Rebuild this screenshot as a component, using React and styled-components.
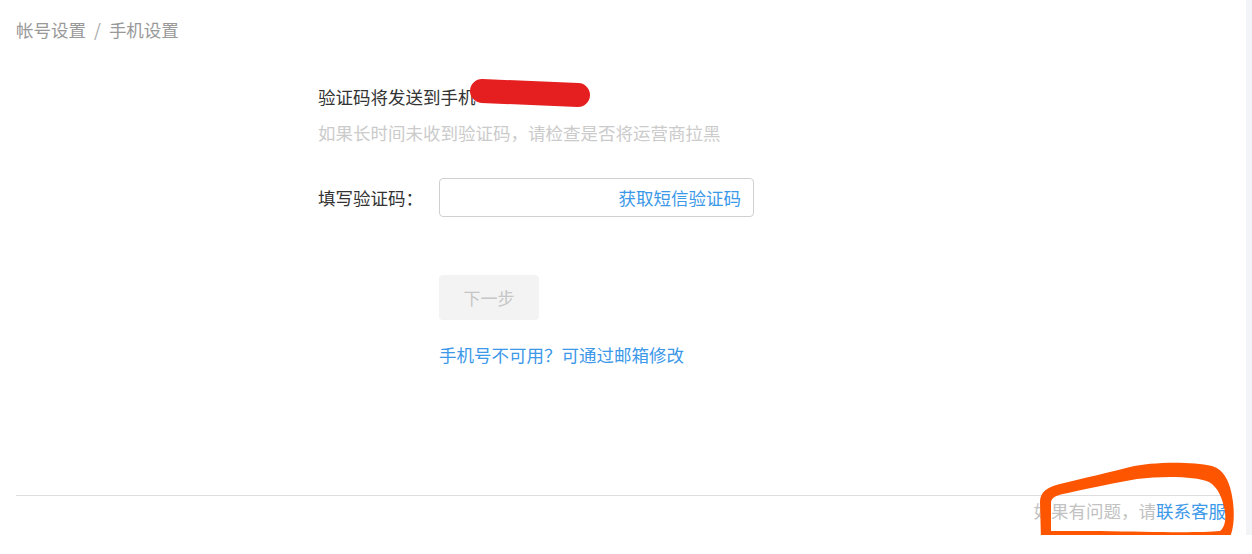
import React from "react";
import styled, { createGlobalStyle } from "styled-components";

const Global = createGlobalStyle`
  html, body { margin: 0; padding: 0; background: #fff; }
  body { font-family: "Noto Sans CJK SC", "Noto Sans", sans-serif; }
`;

const Frame = styled.div`
  position: relative;
  width: 1252px;
  height: 554px;
  background: #fff;
`;

const Shell = styled.div`
  display: flex;
  height: 535px;
`;

const Main = styled.main`
  width: 1246px;
  box-sizing: border-box;
  padding: 0 16px;
  display: flex;
  flex-direction: column;
  background: #fff;
`;

const SideTrack = styled.div`
  flex: 1;
  background: #f3f4f7;
`;

const Breadcrumb = styled.div`
  margin-top: 18px;
  height: 24px;
  line-height: 24px;
  font-size: 17.5px;
  color: #999;
  display: flex;
  gap: 8px;
`;

const Sep = styled.span`
  color: #aaa;
`;

const Form = styled.section`
  width: 610px;
  margin: 43px auto 0;
  display: flex;
  flex-direction: column;
  flex: 1;
`;

const Line = styled.p`
  margin: 0 0 ${(p) => p.$mb || 0}px;
  line-height: 24px;
  font-size: 17.5px;
  color: ${(p) => p.$color || "#333"};
  white-space: nowrap;
`;

const Row = styled.div`
  display: flex;
  align-items: center;
  margin-top: 33px;
`;

const Label = styled.label`
  width: 121px;
  font-size: 17.5px;
  color: #333;
  line-height: 24px;
`;

const InputBox = styled.div`
  width: 315px;
  height: 39px;
  box-sizing: border-box;
  border: 1px solid #d0d0d0;
  border-radius: 4px;
  display: flex;
  align-items: center;
  justify-content: flex-end;
  padding: 0 12px 0 12px;
`;

const Field = styled.input`
  flex: 1;
  min-width: 0;
  border: none;
  outline: none;
  font: inherit;
  font-size: 17.5px;
  background: transparent;
`;

const SmsLink = styled.span`
  font-size: 17.5px;
  color: #3c98e8;
  line-height: 24px;
  white-space: nowrap;
`;

const Indent = styled.div`
  padding-left: 121px;
  display: flex;
  flex-direction: column;
  align-items: flex-start;
`;

const NextButton = styled.button`
  margin-top: 58px;
  width: 100px;
  height: 45px;
  border: none;
  border-radius: 4px;
  background: #f3f3f3;
  color: #c6c6c6;
  font-family: inherit;
  font-size: 17px;
  padding: 0;
`;

const TextLink = styled.a`
  margin-top: 23px;
  font-size: 17.5px;
  line-height: 24px;
  color: #3c98e8;
  text-decoration: none;
`;

const Footer = styled.footer`
  border-top: 1px solid #dedede;
  padding: 3px 4px 12px 0;
  text-align: right;
  font-size: 17.5px;
  line-height: 24px;
  color: #c2c2c2;
`;

const Blue = styled.span`
  color: #3c98e8;
`;

const Overlay = styled.svg`
  position: absolute;
  left: 0;
  top: 0;
  width: 1252px;
  height: 535px;
  pointer-events: none;
`;

export default function App() {
  return (
    <Frame>
      <Global />
      <Shell>
        <Main>
          <Breadcrumb>
            <span>帐号设置</span>
            <Sep>/</Sep>
            <span>手机设置</span>
          </Breadcrumb>
          <Form>
            <Line $mb={12}>验证码将发送到手机</Line>
            <Line $color="#cbcbcb">如果长时间未收到验证码，请检查是否将运营商拉黑</Line>
            <Row>
              <Label>填写验证码：</Label>
              <InputBox>
                <Field type="text" aria-label="验证码" />
                <SmsLink>获取短信验证码</SmsLink>
              </InputBox>
            </Row>
            <Indent>
              <NextButton disabled>下一步</NextButton>
              <TextLink href="#">手机号不可用？可通过邮箱修改</TextLink>
            </Indent>
          </Form>
          <Footer>
            如果有问题，请<Blue>联系客服</Blue>
          </Footer>
        </Main>
        <SideTrack />
      </Shell>
      <Overlay viewBox="0 0 1252 535">
        <path d="M482 91 L578 95" stroke="#e51e1f" strokeWidth="24" strokeLinecap="round" fill="none" />
        <path
          fillRule="evenodd"
          fill="#fe5600"
          d="M1041 540 L1040 502 C1040 492 1047 487 1060 484 C1085 478 1110 472 1130 467 C1150 462 1190 461 1212 466 C1226 470 1231 486 1233 502 C1235 520 1233 530 1229 540 Z
             M1051 531 L1051 503 C1051 497 1057 495 1068 493 C1095 487 1115 483 1137 479 C1162 476 1195 476 1209 482 C1219 488 1223 500 1225 512 C1226 522 1224 528 1220 531 C1200 533 1150 532 1100 531 Z"
        />
      </Overlay>
    </Frame>
  );
}
